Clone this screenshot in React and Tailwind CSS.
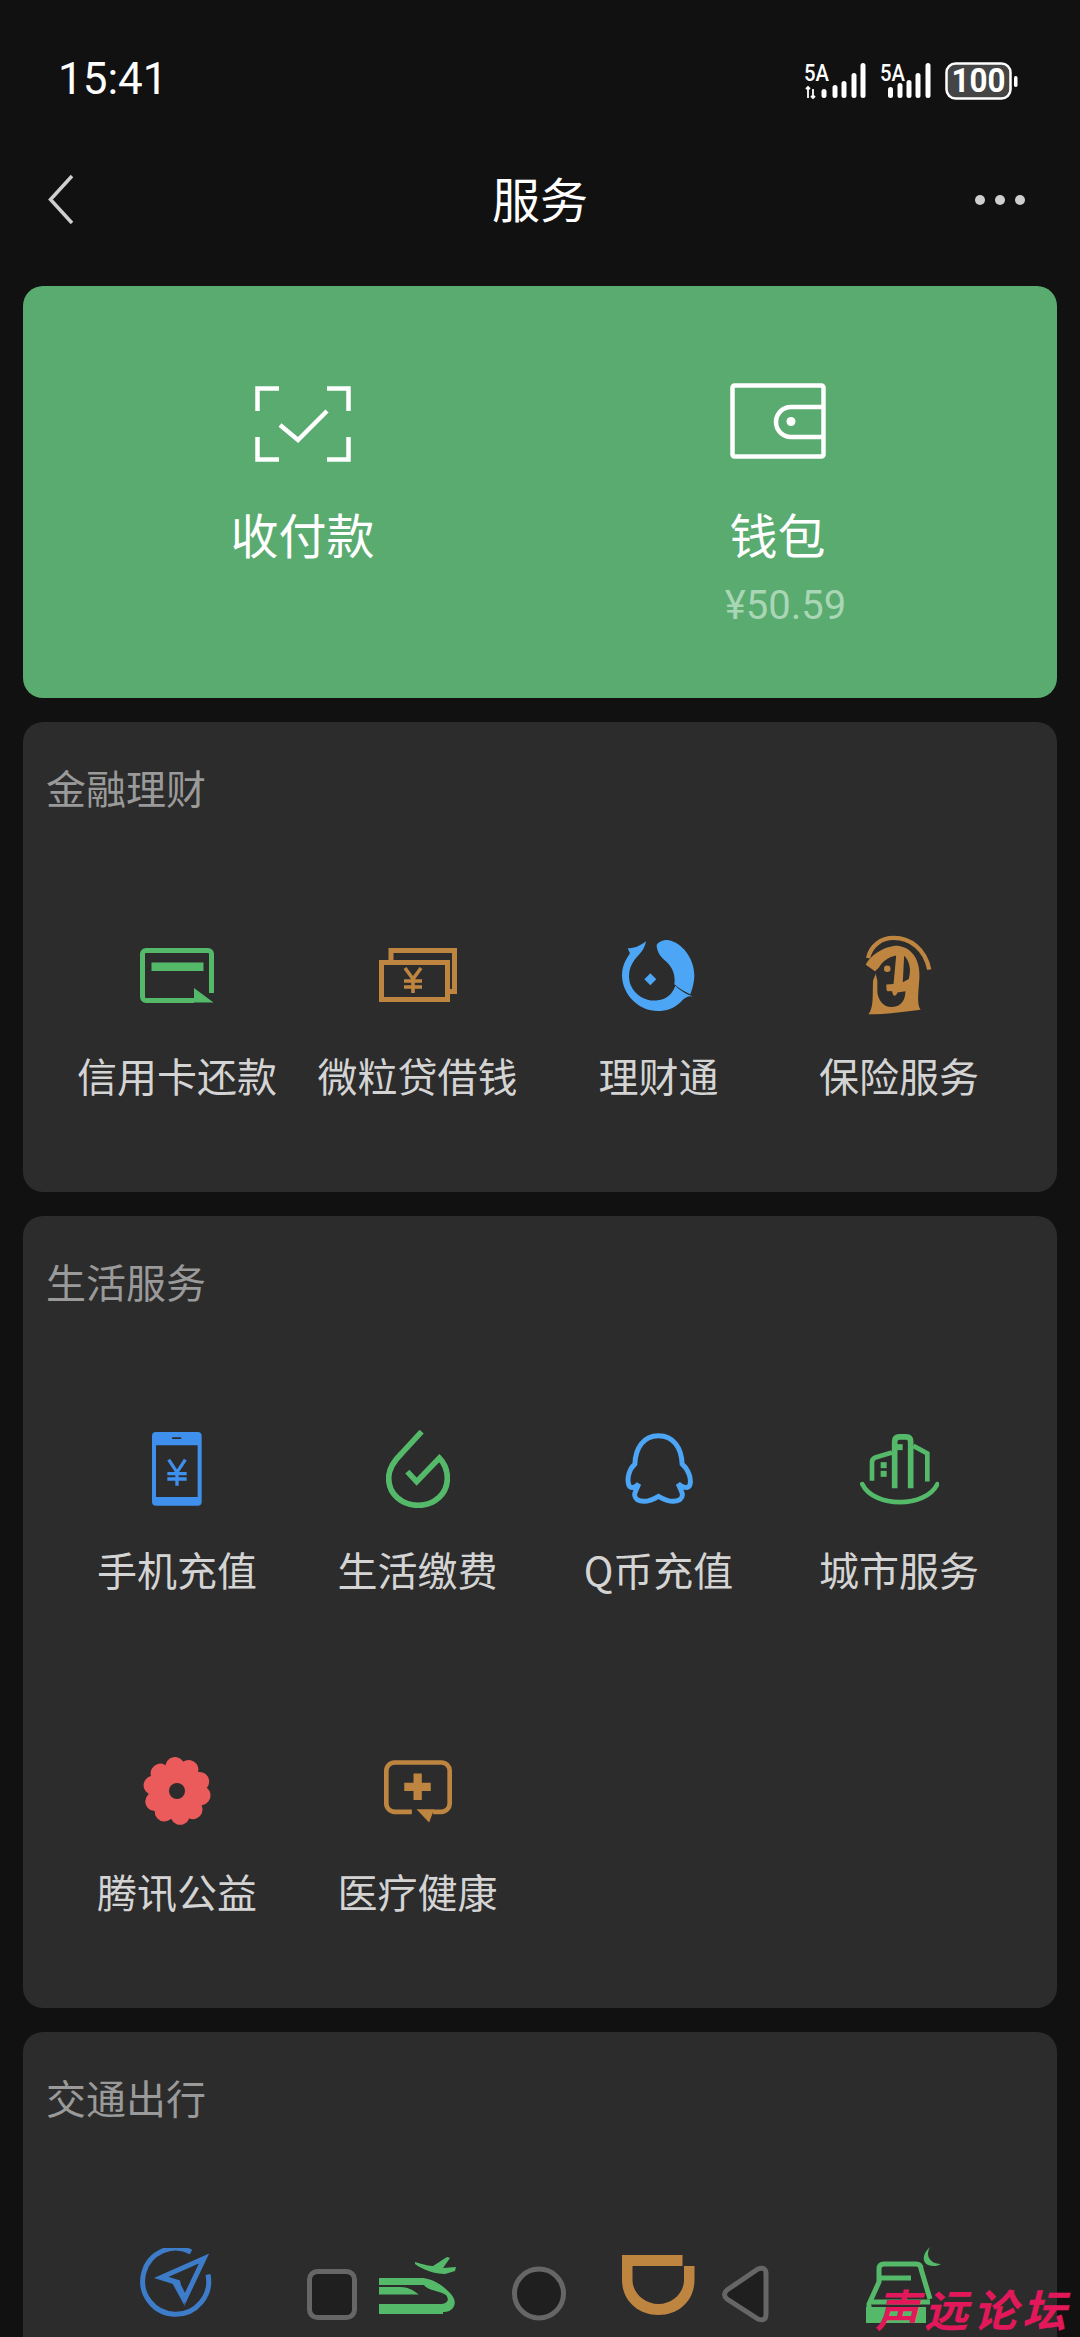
const G = "#55b96a", O = "#be8541", B = "#4da6f5", PH = "#3f8fec", CARD = "#2c2c2c";

function StatusIcons() {
  const t = { fill: "#fff", fontFamily: "Roboto, sans-serif", fontWeight: 500 };
  const bars1 = [[824, 88], [835, 84], [844, 80], [854, 72], [863, 62]];
  const bars2 = [[890.5, 86], [900, 82], [909, 79], [918, 72], [928, 62]];
  return (
    <svg width="216" height="44" viewBox="804 58 216 44" className="mt-1">
      <text x="804" y="80" fontSize="24" textLength="25" lengthAdjust="spacingAndGlyphs" {...t}>5A</text>
      <text x="880" y="80" fontSize="24" textLength="25" lengthAdjust="spacingAndGlyphs" {...t}>5A</text>
      <path d="M808 86v11M813 88v9M806 88l2-2 2 2M811 95l2 2 2-2" stroke="#fff" strokeWidth="1.8" fill="none" />
      {bars1.map(([x, y]) => <rect key={x} x={x - 2.5} y={y} width="5" height={97 - y} rx="2.5" fill="#fff" />)}
      {bars2.map(([x, y]) => <rect key={x} x={x - 2.5} y={y} width="5" height={97 - y} rx="2.5" fill="#fff" />)}
      <rect x="946.5" y="62.5" width="64" height="35" rx="9" fill="#454545" stroke="#fff" strokeWidth="2.5" />
      <text x="978.5" y="91" fontSize="33" fontWeight="700" textAnchor="middle" textLength="54" lengthAdjust="spacingAndGlyphs" fill="#fff" fontFamily="Roboto, sans-serif">100</text>
      <rect x="1014" y="75" width="3.5" height="11" rx="1.7" fill="#fff" />
    </svg>
  );
}

const Back = () => (
  <svg width="26" height="52" viewBox="48 175 26 52">
    <path d="M72 177 50.5 200.5 72 224" fill="none" stroke="#cfcfcf" strokeWidth="3.5" />
  </svg>
);
const Dots = () => (
  <svg width="52" height="12" viewBox="974 194 52 12" className="mr-[6px]">
    <circle cx="980" cy="200" r="5" fill="#cfcfcf" /><circle cx="1000" cy="200" r="5" fill="#cfcfcf" /><circle cx="1020" cy="200" r="5" fill="#cfcfcf" />
  </svg>
);
const Scan = () => (
  <svg width="96" height="76" viewBox="0 0 96 76" fill="none" stroke="#fff" strokeWidth="4.5">
    <path d="M24 2.5H2.5V25M72 2.5H93.5V25M2.5 51V73.5H24M93.5 51V73.5H72" />
    <path d="M25 39 43 54 72 25" />
  </svg>
);
const Wallet = () => (
  <svg width="96" height="76" viewBox="0 0 96 76" fill="none" stroke="#fff" strokeWidth="4.5">
    <rect x="2.5" y="2.5" width="91" height="71" rx="2" />
    <path d="M93 24H61a15 15 0 0 0 0 30H93" />
    <circle cx="61" cy="38.5" r="4.5" fill="#fff" stroke="none" />
  </svg>
);
const CardIco = () => (
  <svg width="74" height="55" viewBox="0 0 74 55" fill="none">
    <path d="M54 52.5H6a3.500 3.500 0 0 1-3.500-3.500V6A3.500 3.500 0 0 1 6 2.500H68A3.500 3.500 0 0 1 71.500 6V45" stroke={G} strokeWidth="5" />
    <rect x="11.500" y="14.500" width="52" height="8.500" fill={G} />
    <path d="M54 40 73.500 54.500H54Z" fill={G} />
  </svg>
);
const Yen = ({ x, y, c }) => (
  <g transform={`translate(${x} ${y})`} fill="none" stroke={c} strokeWidth="3.600">
    <path d="M-8-12 0-1 8-12M0-1V13M-9 1H9M-9 7H9" />
  </g>
);
const Money = () => (
  <svg width="78" height="54" viewBox="0 0 78 54" fill="none">
    <path d="M12 12V2.500H75.500V43.500H69" stroke={O} strokeWidth="5" />
    <rect x="2.500" y="14.500" width="66" height="37" stroke={O} strokeWidth="5" />
    <Yen x={34} y={32} c={O} />
  </svg>
);
const Fish = () => (
  <svg width="74" height="71" viewBox="188 125 222 213">
    <path fill={B} d="M205 150C225 150 245 142 260 128C255 160 235 170 222 190C208 210 205 240 215 262C230 295 265 310 295 306C320 302 338 290 348 262C365 280 390 292 408 296C390 290 378 295 365 310C345 330 320 338 295 338C240 338 188 290 188 230C188 200 205 175 212 165Z" />
    <path fill={B} d="M292 140C300 128 320 122 335 127C375 140 405 185 405 232C405 250 400 270 393 288C380 282 360 272 345 258C350 225 335 200 315 185C300 172 292 155 292 140Z" />
    <path fill={B} d="M273 225 291 243 273 261 255 243Z" />
  </svg>
);
const Insurance = () => (
  <svg width="68" height="80" viewBox="918 102 205 242">
    <path fill="none" stroke={O} strokeWidth="13" d="M1112 207C1100 145 1055 111 1005 111C965 111 935 135 927 172" />
    <path fill={O} d="M920 192C935 160 985 132 1020 135C1060 140 1087 180 1082 235C1079 280 1074 312 1086 328C1040 334 980 342 928 342C945 322 940 280 942 240L952 215Z" />
    <path fill={CARD} d="M960 200C970 182 990 168 1012 164L1004 250 982 252 983 270 1000 272C1002 290 1010 290 1016 276L1040 272C1040 295 1030 318 1000 320C975 322 958 300 955 275L955 240 948 212Z" />
    <path fill={CARD} d="M1036 165C1052 180 1058 205 1050 235L1032 245Z" />
    <circle cx="985" cy="204" r="10" fill={O} />
    <path fill={O} d="M1014 160H1030L1022 252 1045 252 1043 270 985 272 985 256 1006 254Z" />
  </svg>
);
const Phone = () => (
  <svg width="50" height="74" viewBox="158 97 150 222">
    <path fillRule="evenodd" fill={PH} d="M170 97H295A12 12 0 0 1 307 109V306A12 12 0 0 1 295 318H170A12 12 0 0 1 158 306V109A12 12 0 0 1 170 97ZM170 137V292H295V137Z" />
    <rect x="218" y="113" width="28" height="5" rx="2" fill="#2c2c2c" />
    <path fill="none" stroke={PH} strokeWidth="10" d="M208 180 233 218 258 180M233 218V258M204 222H262M204 238H262" />
  </svg>
);
const Drop = () => (
  <svg width="64" height="78" viewBox="858 88 192 234" fill="none">
    <path stroke={G} strokeWidth="17" d="M965 93 905 158C880 182 866 205 866 232C866 280 905 314 955 314C1003 314 1042 280 1042 232C1042 208 1035 190 1018 172L950 243 922 213" />
  </svg>
);
const QQ = () => (
  <svg width="68" height="73" viewBox="133 96 207 221" fill="none">
    <path stroke={B} strokeWidth="15" d="M235 104C190 104 165 140 163 190C145 205 138 235 145 255C150 265 165 262 175 250C165 275 155 285 170 298C190 310 215 300 235 288C255 300 280 310 300 298C315 285 305 275 295 250C308 262 325 265 330 255C337 235 325 205 307 190C305 140 280 104 235 104Z" />
  </svg>
);
const City = () => (
  <svg width="79" height="71" viewBox="838 100 237 212" fill="none" stroke={G} strokeWidth="14">
    <path strokeLinecap="round" d="M845 250C880 322 1035 322 1070 250" />
    <path strokeWidth="17" d="M942 262V122Q942 108 956 108H976Q990 108 990 122V262" />
    <path d="M934 155 884 170Q874 174 874 184V240" />
    <path d="M998 135 1040 158V242" />
    <rect x="948" y="130" width="18" height="18" fill={G} stroke="none" />
    <rect x="900" y="184" width="18" height="18" fill={G} stroke="none" />
    <rect x="900" y="210" width="18" height="18" fill={G} stroke="none" />
  </svg>
);
const Flower = () => {
  const red = "#ec5b5b";
  return (
    <svg width="70" height="70" viewBox="-105 -105 210 210">
      {[-78, -6, 66, 138, 210].map((a) => (
        <g key={a} transform={`rotate(${a})`} fill={red}>
          <circle cx="70" cy="-21" r="29" />
          <circle cx="70" cy="21" r="29" />
        </g>
      ))}
      <circle r="72" fill={red} />
      <circle r="24" fill={CARD} />
    </svg>
  );
};
const Medical = () => (
  <svg width="68" height="63" viewBox="852 95 205 189" fill="none">
    <path stroke={O} strokeWidth="14" d="M936 251H884A25 25 0 0 1 859 226V127A25 25 0 0 1 884 102H1025A25 25 0 0 1 1050 127V226A25 25 0 0 1 1025 251H1000" />
    <path fill={O} d="M950 243H1003L988 283Z" />
    <path fill={O} d="M941 135H966V163H993V188H966V215H941V188H913V163H941Z" />
  </svg>
);
const NavIco = () => {
  const c = "#3d7cc9";
  return (
    <svg width="74" height="74" viewBox="141 2247.500 74 74" fill="none">
      <path stroke={c} strokeWidth="5" d="M192 2251.500A33 33 0 1 0 209 2274" />
      <path stroke={c} strokeWidth="5" strokeLinejoin="miter" d="M205 2258 162 2277 178 2282 186 2298Z" />
      <path fill={c} d="M168 2276 181 2280 186 2306 174 2284Z" />
    </svg>
  );
};
const Train = () => (
  <svg width="77" height="58" viewBox="379 2256 77 58" fill={G}>
    <path d="M379 2278H423C432 2279 441 2284 448 2291C454 2296 456 2302 454 2306C452 2311 447 2312 443 2312V2314H379V2304H440C447 2304 450 2300 446 2295C438 2290 428 2291 424 2285H379Z" />
    <path d="M379 2287H400C410 2287 415 2292 419 2294.500H379Z" />
    <path d="M415 2262C425 2265 430 2266 433 2266L447 2257 450 2258 443 2268 456 2267 455 2271 445 2274C435 2274 423 2270 415 2264Z" />
  </svg>
);
const Didi = () => (
  <svg width="73" height="60" viewBox="622.500 2255 73 60">
    <path fill={O} fillRule="evenodd" d="M622.500 2255H683V2266H695V2280C695 2300 680 2315 659 2315C638 2315 622.500 2300 622.500 2280ZM633 2266V2280C633 2293 645 2304 659 2304C673 2304 684.500 2293 684.500 2280V2266Z" />
  </svg>
);
const Car = () => (
  <svg width="75" height="76" viewBox="866 2243 75 76" fill="none" className="ml-[8px]">
    <path fill={G} d="M930 2243C922 2250 922 2258 928 2261C933 2263 938 2262 941 2260C934 2260 928 2256 928 2250C928 2247 929 2245 930 2243Z" />
    <path stroke={G} strokeWidth="5" d="M869 2318V2300L879 2278V2265Q879 2260 884 2260H916Q921 2260 921 2265L930 2295" />
    <path stroke={G} strokeWidth="5" d="M879 2274H911M872 2298H930" />
    <rect x="866" y="2303" width="60" height="16" fill={G} />
  </svg>
);

function Cell({ icon, label }) {
  return (
    <div className="h-[322px] pt-[69px] flex flex-col items-center">
      <div className="h-[100px] flex items-center justify-center">{icon}</div>
      {label && <div className="mt-[22px] h-[56px] leading-[56px] text-[40px] text-[#d4d4d4] whitespace-nowrap">{label}</div>}
    </div>
  );
}

function Section({ title, items }) {
  return (
    <section className="bg-[#2c2c2c] rounded-[20px] pb-[14px]">
      <h2 className="h-[134px] pl-[23px] pb-[4px] flex items-center text-[40px] font-normal text-[#9a9a9a]">{title}</h2>
      <div className="grid grid-cols-[240px_241px_241px_240px] pl-[34px]">
        {items.map((it, i) => <Cell key={i} {...it} />)}
      </div>
    </section>
  );
}

function SystemNav() {
  const s = { fill: "#1f1f1f", stroke: "#666", strokeWidth: 5 };
  return (
    <svg className="absolute left-0 top-[2243px]" width="1080" height="94" viewBox="0 2243 1080 94">
      <rect x="309.500" y="2271.500" width="45" height="46" rx="8" {...s} />
      <circle cx="539" cy="2293.500" r="24.500" {...s} />
      <path d="M727 2290 758 2269Q766 2266 766 2274V2314Q766 2322 758 2319L727 2299Q722 2294.500 727 2290Z" {...s} />
    </svg>
  );
}

export default function App() {
  return (
    <div className="relative w-[1080px] h-[2337px] overflow-hidden bg-[#111111] font-['Noto_Sans_CJK_SC','Noto_Sans',sans-serif]">
      <div className="h-[156px] pt-[2px] flex items-center justify-between pl-[58px] pr-[60px]">
        <span className="font-['Roboto',sans-serif] text-[44px] text-white">15:41</span>
        <StatusIcons />
      </div>
      <div className="h-[88px] grid grid-cols-[1fr_auto_1fr] items-center px-[48px]">
        <div className="flex justify-start"><Back /></div>
        <span className="text-[48px] leading-[60px] pb-[6px] text-white">服务</span>
        <div className="flex justify-end"><Dots /></div>
      </div>
      <main className="mt-[42px] mx-[23px] flex flex-col gap-[24px]">
        <section className="h-[412px] bg-[#5aab70] rounded-[20px] grid grid-cols-[475px_475px] pl-[42px] pt-[97px]">
          <div className="flex flex-col items-center">
            <div className="h-[79px] flex items-end"><Scan /></div>
            <div className="mt-[41px] h-[60px] leading-[60px] text-[48px] text-white">收付款</div>
          </div>
          <div className="flex flex-col items-center">
            <div className="h-[79px] flex items-start"><Wallet /></div>
            <div className="mt-[41px] h-[60px] leading-[60px] text-[48px] text-white">钱包</div>
            <div className="mt-[21px] h-[44px] leading-[44px] pl-4 font-['Roboto',sans-serif] text-[40px] text-[#a9d6b5]">¥50.59</div>
          </div>
        </section>
        <Section title="金融理财" items={[
          { icon: <CardIco />, label: "信用卡还款" },
          { icon: <Money />, label: "微粒贷借钱" },
          { icon: <Fish />, label: "理财通" },
          { icon: <Insurance />, label: "保险服务" },
        ]} />
        <Section title="生活服务" items={[
          { icon: <Phone />, label: "手机充值" },
          { icon: <Drop />, label: "生活缴费" },
          { icon: <QQ />, label: "Q币充值" },
          { icon: <City />, label: "城市服务" },
          { icon: <Flower />, label: "腾讯公益" },
          { icon: <Medical />, label: "医疗健康" },
        ]} />
        <Section title="交通出行" items={[
          { icon: <NavIco /> },
          { icon: <Train /> },
          { icon: <Didi /> },
          { icon: <Car /> },
        ]} />
      </main>
      <SystemNav />
      <div className="absolute left-[875px] top-[2286px] text-[44px] leading-[44px] font-bold italic tracking-[5px] text-[#e2185b] whitespace-nowrap">声远论坛</div>
    </div>
  );
}
